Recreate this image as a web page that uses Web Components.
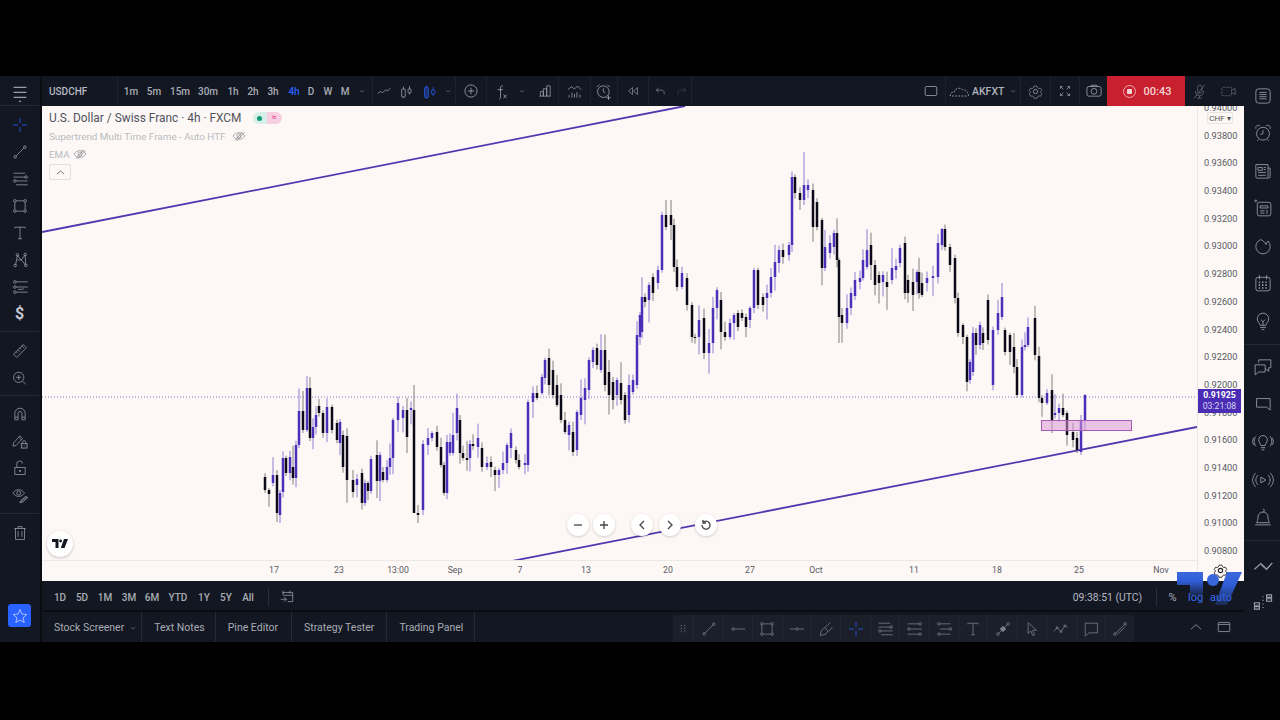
<!DOCTYPE html>
<html lang="en">
<head>
<meta charset="utf-8">
<title>USDCHF chart</title>
<style>
html,body{margin:0;height:720px;overflow:hidden;background:#000;font-family:Roboto,"Liberation Sans",sans-serif}
body{padding-top:76px;box-sizing:border-box}
</style>
</head>
<body>
<tv-app></tv-app>
<script>
const c=(x,y,r=2)=>`<circle cx="${x}" cy="${y}" r="${r}"/>`;
const ICONS={
menu:`<path stroke-width="2" d="M4 8.500h20M4 16h20M4 24h20"/><circle cx="14" cy="30" r="1" fill="currentColor"/>`,
cross:`<path d="M14 3v8M14 17v8M3 14h8M17 14h8"/>`,
line:`<path d="M8 20 20 8"/>${c(6.5,21.5)}${c(21.5,6.5)}`,
hray:`<path d="M9 14h16"/>${c(6.5,14)}`,
seg:`<path d="M3 14h8.500M16.500 14H25"/>${c(14,14)}`,
fib:`<path d="M4 6h18M8 14h18M4 22h18"/>${c(23.500,6)}${c(6,14)}${c(23.500,22)}`,
fib2:`<path d="M4 5h18M4 11h18M8 17h18M8 23h18"/>${c(23.500,11)}${c(6,17)}`,
chan:`<path d="M8 6h16M8 14h14M8 22h16"/>${c(6,6)}${c(24,14)}${c(6,22)}`,
rect:`<path d="M8 6h12M8 22h12M6 8v12M22 8v12"/>${c(6,6)}${c(22,6)}${c(6,22)}${c(22,22)}`,
text:`<path d="M6 7V5h16v2M14 5v18M11 23h6"/>`,
pattern:`<path d="M7 22 10 7l6 7 6-8 1 16-7-8-6 0"/>${c(6.500,22.500)}${c(10,6)}${c(22,5.500)}${c(23,22.500)}`,
forecast:`<path d="M8 6h18M8 14h18M8 22h18M11 18l9-1"/>${c(6,6)}${c(6,14)}${c(6,22)}`,
ruler:`<path d="m4 19 15-15 5 5-15 15zM8 15l2 2M11 12l3 3M14 9l2 2M17 6l3 3"/>`,
zoom:`<circle cx="12" cy="13" r="8"/><path d="M12 9v8M8 13h8M18 19l5 5"/>`,
magnet:`<path d="M6 23V13a8 8 0 0 1 16 0v10h-5V13a3 3 0 0 0-6 0v10zM6 19h5M17 19h5"/>`,
pencillock:`<path d="m4 17 10-11 4 4L8 21l-5 1zM12 8l4 4"/><rect x="16" y="18" width="9" height="7" fill="currentColor" fill-opacity=".12"/><path d="M18 18v-2a2.500 2.500 0 0 1 5 0v2"/>`,
lock:`<rect x="6" y="13" width="16" height="11"/><path d="M9 13V8a4.500 4.500 0 0 1 9-1"/><circle cx="14" cy="18.500" r="1" fill="currentColor"/>`,
eyepencil:`<path d="M3 11c5-7 13-7 18 0-5 7-13 7-18 0z"/><circle cx="12" cy="11" r="3"/><path d="m15 23 8-7 3 2-8 7-4 1z" fill="currentColor" fill-opacity=".4"/>`,
trash:`<path d="M5 7h18M11 7V4h6v3M7 7v17h14V7M11 11v9M17 11v9"/>`,
star:`<path d="m14 4 3 7 7.500.700-5.700 5 1.700 7.300L14 20.200 7.500 24l1.700-7.300-5.700-5L11 11z"/>`,
lineChart:`<path d="m3 18 5-3 4 2 5-5 3 2 5-5"/>`,
candle:`<path d="M9 6v4M9 23v2M19 5v5M19 16v3"/><rect x="6" y="10" width="6" height="13" rx="1"/><rect x="16.500" y="10" width="5" height="6" rx="1"/>`,
candleBlue:`<path d="M9 4v3M9 24v2M20 7v5M20 18v3"/><rect x="6" y="7" width="6" height="17" rx="1" fill="currentColor" fill-opacity=".35"/><rect x="17" y="12" width="6" height="6" rx="1"/>`,
plusc:`<circle cx="14" cy="14" r="9.500"/><path d="M14 9v10M9 14h10"/>`,
fx:`<path d="M14 24c0 1-1 2-2.500 2M18 5c-2-1-4 0-4 3v16M9 11h9M19 19l5 6M24 19l-5 6"/>`,
bars:`<path d="M4 23h20M6 23v-8h5v8M11 23V10h6v13M17 23V5h6v18"/>`,
indicator:`<path d="m3 11 6-5 5 4 5-5 6 6M5 24v-4M10 24v-8M14 24v-6M18 24v-9M23 24v-5"/>`,
alarm:`<circle cx="13" cy="15" r="9"/><path d="M3 8l4-4M19 4l4 4M13 10v5l3 2M21 21v7M17.500 24.500h7"/>`,
rewind:`<path d="M13 7 5 14l8 7zM23 7l-8 7 8 7z"/>`,
undo:`<path d="M10 6 5 11l5 5M5 11h11c4 0 6 3 6 6v3"/>`,
redo:`<path d="m18 6 5 5-5 5M23 11H12c-4 0-6 3-6 6v3"/>`,
square:`<rect x="5" y="7" width="18" height="14" rx="2"/>`,
cloud:`<path stroke-dasharray="2.500 2" d="M2 21c-1-4 2-6 5-5 1-6 9-8 13-3 4-1 6 2 6 4 1 0 2 2 1 4z"/>`,
gear:`<path d="m11 3 6 0 1 3 3 2 3-1 3 5-2 2v3l2 2-3 5-3-1-3 2-1 3h-6l-1-3-3-2-3 1-3-5 2-2v-3l-2-2 3-5 3 1 3-2z" transform="translate(2.800 2.800) scale(.8)"/><circle cx="14" cy="14" r="3.500"/>`,
expand:`<path d="M6 6l5 5M6 10V6h4M22 6l-5 5M22 10V6h-4M6 22l5-5M6 18v4h4M22 22l-5-5M22 18v4h-4"/>`,
camera:`<rect x="3" y="7" width="22" height="15" rx="3"/><circle cx="14" cy="14.500" r="4.500"/><path d="M9 7l1-2h8l1 2"/>`,
micoff:`<path d="M11 14V7a3.500 3.500 0 0 1 7 0v6a3.500 3.500 0 0 1-7 1zM7 13c0 5 3 8 7 8s7-3 7-8M14 21v4M10 25h8M5 25 23 3"/>`,
video:`<rect x="3" y="7" width="16" height="14" rx="2" stroke-dasharray="4 1.500"/><path d="m19 12 6-3v10l-6-3"/>`,
doc:`<rect x="4" y="4" width="20" height="20" rx="4"/><path d="M9 9h10M9 12h10M9 15h10M9 18h10"/>`,
clock:`<circle cx="14" cy="15" r="9"/><path d="M4 8c-1-4 3-6 6-4M24 8c1-4-3-6-6-4M14 10v5l-4 1M8 23l-2 2M20 23l2 2"/>`,
news:`<path d="M4 5h17v19H6a2 2 0 0 1-2-2zM21 10h3v12a2 2 0 0 1-2 2M7 9h6v4H7zM15 9h3M15 12h3M7 16h11M7 20h11"/>`,
listspark:`<rect x="6" y="6" width="19" height="19" rx="3"/><path d="M10 11h11v3H10zM10 18h6M18 18h3M10 21h6M18 21h3M2 4h4M4 2v4"/>`,
flame:`<path d="M11 5C6 7 4 11 4 15a10 10 0 0 0 20 0c0-3-1-6-3-8l-3 5c-1-3-3-5-7-7z"/>`,
calendar:`<rect x="4" y="6" width="20" height="19" rx="3"/><path d="M9 3v6M19 3v6"/><path stroke-width="2.200" stroke-dasharray="2 2.600" d="M8 13h13M8 17h13M8 21h13"/>`,
bulb:`<path d="M10 20c0-3-4-4-4-9a8 8 0 0 1 16 0c0 5-4 6-4 9zM10 23h8M12 26h4M14 14v6M11 12l3 3 3-3"/>`,
chats:`<path d="M3 11h14v10H8l-5 4zM8 8V4h17v11h-3M22 15v5l-5-4"/>`,
chat:`<path d="M5 5h19v16l-5-4H5z"/>`,
bulbwave:`<path d="M11 19c0-3-3-4-3-8a6 6 0 0 1 12 0c0 4-3 5-3 8zM11 22h6M12 25h4M4 6c-3 4-3 10 0 14M24 6c3 4 3 10 0 14M1 8c-2 3-2 7 0 10M27 8c2 3 2 7 0 10"/>`,
broadcast:`<path d="m11 10 7 4-7 4zM7 7c-4 4-4 10 0 14M21 7c4 4 4 10 0 14M4 4c-6 6-6 14 0 20M24 4c6 6 6 14 0 20"/>`,
bell:`<path d="M14 3a2 2 0 0 1 0 4 7 7 0 0 0-7 7c0 5-1 6-2 8h18c-1-2-2-3-2-8a7 7 0 0 0-7-7M3 25h22"/>`,
chev2:`<path d="m2 20 9-8 7 7M12 14l7 6 8-9" stroke-width="1.800"/>`,
dots:`<path stroke-width="1.600" d="M2 15h7v3.500H2zM2 20.500h7V24H2zM19 4h7v3.500h-7zM19 9.500h7V13h-7zM14 6v1.500M14 11v1.500M14 16v1.500M14 21v1.500"/>`,
drag:`<path stroke-width="1.800" stroke-dasharray="1.800 3" d="M11 7v15M17 7v15"/>`,
brush:`<path d="m5 24 2-8 5-4 5 5-3 5zM12 12l9-8M18 18l6-7"/>`,
pin:`<path d="M7 21 21 7"/>${c(6,22)}${c(22,6)}<rect x="11" y="11" width="6" height="6" transform="rotate(45 14 14)" fill="currentColor"/>`,
cursor:`<path d="M8 4v17l4-4 3 7 3-1-3-7h6z"/>`,
wave:`<path d="m3 18 5-6 6 6 6-9 4 2"/>${c(8,12,1.500)}${c(14,18,1.500)}${c(20,9,1.500)}`,
callout:`<path d="M5 5h19v15H11l-6 5z"/>`,
measure:`<path d="M7 21 21 7M10 22 22 11"/>${c(6,22)}${c(22,6)}`,
chevup:`<path d="m5 18 9-8 9 8"/>`,
window:`<rect x="4" y="6" width="20" height="16" rx="1.500"/><path d="M4 9.500h20"/>`,
calgo:`<path d="M7 10V6h17v16H15M7 3v5M19 3v5M7 11h17M3 18h10M9 14l4 4-4 4"/>`,
eyeoff:`<path d="M2 14c6-9 18-9 24 0-6 9-18 9-24 0z"/><circle cx="14" cy="14" r="4"/><path d="M6 23 22 5M9 24 25 7"/>`,
chev:`<path d="m8 12 6 5 6-5"/>`
};
class TvIcon extends HTMLElement{
  connectedCallback(){
    const s=this.getAttribute('size')||18,w=this.getAttribute('w')||s,sw=this.getAttribute('sw')||1.2;
    this.attachShadow({mode:'open'}).innerHTML=`<style>:host{display:inline-flex;align-items:center;justify-content:center;flex:none;width:${w}px;height:100%;color:inherit}svg{display:block;fill:none;stroke:currentColor;stroke-width:${sw};overflow:visible}</style><svg width="${s}" height="${s}" viewBox="0 0 28 28">${ICONS[this.getAttribute('name')]||''}</svg>`;
  }
}
customElements.define('tv-icon',TvIcon);

class TvHeader extends HTMLElement{
  connectedCallback(){
    const iv=[['1m',22],['5m',24],['15m',28],['30m',28],['1h',22],['2h',18],['3h',22],['4h',20],['D',14],['W',20],['M',14]];
    this.attachShadow({mode:'open'}).innerHTML=`<style>
    :host{display:flex;align-items:center;height:30px;background:#131722;color:#a9acb5;font-size:10px;box-sizing:border-box;border-left:2px solid #0b0d13}
    .sym{width:75px;padding-left:7px;box-sizing:border-box;font-weight:500;height:100%;display:flex;align-items:center;color:#b6b9c2;flex:none}
    .d{width:1px;height:100%;background:#1d212c;flex:none}
    .iv{display:flex;height:100%;align-items:center;padding-left:2px;font-weight:500}
    .iv span{display:block;text-align:center}
    .on{color:#2962ff}
    .sp{flex:1}
    .blue{color:#2962ff}
    .dim{color:#4a4e5a}
    .rec{width:78px;height:100%;background:#c8202e;color:#f4d5d7;display:flex;align-items:center;justify-content:center;gap:8px;font-weight:500;font-size:11px;padding-left:2px;box-sizing:border-box}
    .dot{width:13px;height:13px;border:1px solid #f0a8ad;border-radius:50%;box-sizing:border-box;display:flex;align-items:center;justify-content:center}
    .dot::after{content:"";display:block;width:5px;height:5px;background:#f4d5d7;border-radius:1px}
    .name{font-weight:500;width:34px;font-size:10.500px;color:#b0b3bc;flex:none}
    </style>
    <div class="sym">USDCHF</div><div class="d"></div>
    <div class="iv">${iv.map(([t,w])=>`<span class="${t=='4h'?'on':''}" style="width:${w}px">${t}</span>`).join('')}</div>
    <tv-icon name="chev" size="10" w="20"></tv-icon><div class="d"></div>
    <tv-icon name="lineChart" size="16" w="22"></tv-icon>
    <tv-icon name="candle" size="17" w="22"></tv-icon>
    <tv-icon class="blue" name="candleBlue" size="17" w="24"></tv-icon>
    <tv-icon name="chev" size="10" w="14"></tv-icon><div class="d"></div>
    <tv-icon name="plusc" size="18" w="30"></tv-icon><div class="d"></div>
    <tv-icon name="fx" size="17" w="26"></tv-icon>
    <tv-icon name="chev" size="10" w="18"></tv-icon>
    <tv-icon name="bars" size="16" w="27"></tv-icon><div class="d"></div>
    <tv-icon name="indicator" size="17" w="31"></tv-icon><div class="d"></div>
    <tv-icon name="alarm" size="18" w="26"></tv-icon><div class="d"></div>
    <tv-icon name="rewind" size="14" w="30"></tv-icon><div class="d"></div>
    <tv-icon name="undo" size="13" w="22"></tv-icon>
    <tv-icon class="dim" name="redo" size="13" w="20"></tv-icon><div class="d"></div>
    <div class="sp"></div>
    <tv-icon name="square" size="18" w="28"></tv-icon><div class="d"></div>
    <tv-icon name="cloud" size="20" w="26"></tv-icon><span class="name">AKFXT</span>
    <tv-icon name="chev" size="10" w="14"></tv-icon><div class="d"></div>
    <tv-icon name="gear" size="17" w="29"></tv-icon><div class="d"></div>
    <tv-icon name="expand" size="16" w="28"></tv-icon><div class="d"></div>
    <tv-icon name="camera" size="18" w="27"></tv-icon>
    <div class="rec"><span class="dot"></span><span>00:43</span></div>
    <tv-icon name="micoff" size="17" w="29" style="color:#6a6e78"></tv-icon>
    <tv-icon name="video" size="17" w="29" style="color:#6a6e78"></tv-icon>
    <div style="width:1px"></div>`;
  }
}
customElements.define('tv-header',TvHeader);

class TvRail extends HTMLElement{
  connectedCallback(){
    const items=(this.getAttribute('items')||'').split(' ');
    const h=+this.getAttribute('step')||27, sz=+this.getAttribute('iconsize')||19;
    this.attachShadow({mode:'open'}).innerHTML=`<style>
    :host{display:flex;flex-direction:column;align-items:stretch;background:#131722;color:#9a9da6;height:566px;box-sizing:border-box;flex:none}
    .it{display:flex;align-items:center;justify-content:center;flex:none}
    .hr{height:1px;background:#262a35;flex:none}
    .sp{flex:1}
    .usd{font:700 16px Roboto,sans-serif;color:#c3c6ce}
    .blue{color:#2962ff}
    .fav{width:23px;height:23px;border-radius:3px;background:#2962ff;color:#cfdcff;display:flex;align-items:center;justify-content:center}
    .fav tv-icon{height:auto}
    </style>`+items.map(t=>{
      let m;
      if(m=t.match(/^gap(\d+)$/))return `<div style="height:${m[1]}px;flex:none"></div>`;
      if(t=='hr')return `<div class="hr"></div>`;
      if(t=='sp')return `<div class="sp"></div>`;
      if(t=='usd')return `<div class="it usd" style="height:${h}px">$</div>`;
      if(t=='fav')return `<div class="it" style="height:${h}px"><div class="fav"><tv-icon name="star" size="18"></tv-icon></div></div>`;
      const blue=t=='cross';
      return `<div class="it ${blue?'blue':''}" style="height:${h}px"><tv-icon name="${t}" size="${sz}"></tv-icon></div>`;
    }).join('');
  }
}
customElements.define('tv-rail',TvRail);

const CANDLES=`265 477 490 k,269 490 494 k,273 475 483 p,277 475 513 k,280 493 515 p,283 458 492 p,286 458 473 k,290 457 473 p,293 467 478 k,296 445 478 p,299 411 445 p,303 411 430 k,307 388 430 p,310 388 438 k,313 427 438 p,316 415 427 p,319 406 413 k,323 413 433 k,327 407 433 p,332 407 430 k,337 423 440 k,340 422 443 p,343 435 467 k,347 436 480 k,353 480 492 k,357 479 485 p,362 473 503 k,365 483 503 p,368 483 491 k,371 459 491 p,377 455 481 k,380 455 481 p,383 472 480 k,387 467 480 p,390 458 467 p,393 420 458 p,398 403 420 p,403 410 418 p,407 410 437 k,411 408 410 p,414 410 513 k,418 513 515 k,423 444 510 p,428 438 445 p,432 433 438 p,437 432 447 k,441 447 465 k,444 465 493 k,447 442 493 p,450 442 453 p,453 435 453 p,457 408 433 p,460 420 453 k,463 453 458 k,467 458 460 k,470 444 458 p,473 444 446 k,478 438 447 p,482 448 467 k,487 463 467 p,491 462 467 k,495 470 475 k,499 470 475 p,503 463 470 p,507 445 463 p,511 433 448 p,516 450 460 k,519 460 467 k,525 463 465 p,528 402 465 p,533 393 402 p,537 393 398 k,542 377 393 p,545 360 378 p,549 358 385 k,553 370 395 k,557 385 405 k,561 395 420 k,565 420 432 k,569 425 435 p,573 432 452 k,577 412 450 p,581 398 415 p,585 388 400 p,589 360 390 p,593 350 362 p,597 348 365 k,601 350 370 p,605 350 385 k,609 372 395 k,613 382 400 k,617 380 395 p,621 383 400 k,625 395 420 k,629 385 415 p,633 380 392 p,637 335 385 p,640 315 337 p,642 297 332 p,645 297 302 k,649 285 300 p,653 277 293 k,658 270 283 p,662 215 270 p,666 215 227 k,671 215 225 k,674 225 267 k,677 267 287 k,682 273 287 p,687 278 305 k,692 305 337 k,695 337 338 k,699 320 337 p,704 318 353 k,709 343 353 p,713 308 343 p,717 290 308 p,721 300 332 k,725 332 337 k,730 323 337 p,734 315 323 p,738 313 327 k,742 313 318 k,746 317 327 k,750 308 320 p,754 270 308 p,758 270 305 k,763 297 305 k,767 293 298 p,771 277 293 p,775 262 277 p,779 250 263 p,783 250 257 k,789 245 255 p,792 177 245 p,795 177 193 k,800 193 200 k,804 185 200 p,808 185 190 p,813 190 227 k,817 202 227 k,822 220 268 k,825 247 268 p,830 243 253 p,834 233 247 p,837 233 260 k,839 260 317 k,842 315 323 k,847 308 323 p,851 293 308 p,855 280 296 p,860 278 282 p,863 260 278 p,867 250 267 p,871 245 265 k,875 265 285 k,879 275 283 k,883 275 282 p,887 282 287 k,892 268 280 p,896 266 270 p,900 248 263 p,905 243 293 k,908 280 293 k,913 282 295 k,917 272 282 p,919 272 293 k,922 283 295 k,927 278 283 p,933 276 278 p,938 243 277 p,942 229 245 p,945 229 247 k,950 247 265 k,955 258 298 k,958 298 333 k,963 325 337 k,967 337 382 k,970 362 380 p,973 333 372 p,976 333 345 k,980 325 345 p,983 333 343 k,988 300 340 k,993 330 385 p,998 313 330 p,1002 297 317 p,1005 330 352 k,1010 335 352 k,1014 347 367 k,1017 367 395 k,1022 347 395 p,1025 345 347 p,1028 327 345 p,1035 318 355 k,1039 356 398 k,1042 398 403 k,1047 393 403 p,1052 390 420 k,1055 413 415 p,1059 408 413 p,1063 408 415 k,1067 413 435 k,1073 432 440 k,1077 438 450 k,1081 420 452 p,1085 395 420 p`;
const WICK={414:[385,513],804:[152,205],307:[376,432],277:[470,522],280:[490,523],418:[505,523],1002:[283,320],666:[200,230],671:[200,240],942:[228,250],1081:[415,455],1085:[394,430],839:[258,343],423:[440,515],1077:[432,453]};
class TvCandles extends HTMLElement{
  connectedCallback(){
    let seed=12345;const rnd=()=>(seed=(seed*16807)%2147483647)/2147483647;
    let out='';
    for(const row of CANDLES.split(',')){
      const [xs,a,b,col]=row.split(' ');const x=+xs,top=+a,bot=+b;
      const fill=col=='p'?'#4a2fb8':'#0c0a18';
      const w=WICK[x]||[top-2-rnd()*rnd()*22,bot+2+rnd()*rnd()*24];
      out+=`<rect x="${x-.5}" y="${w[0].toFixed(1)}" width="1" height="${(w[1]-w[0]).toFixed(1)}" fill="${col=='p'?'#6a55c4':'#555'}" opacity=".75"/>`;
      out+=`<rect x="${x-1.25}" y="${top}" width="2.5" height="${Math.max(bot-top,1)}" fill="${fill}"/>`;
    }
    this.attachShadow({mode:'open'}).innerHTML=`<style>:host{display:block;position:absolute;inset:0;overflow:hidden}svg{display:block;filter:blur(.45px)}</style>
    <svg width="1155" height="454" viewBox="42 106 1155 454">
      <path d="M42 397H1197" stroke="#8a73c8" stroke-width="1" stroke-dasharray="1 2"/>
      <path d="M42 232 685 106" stroke="#5238b0" stroke-width="1.800" fill="none"/>
      <path d="M512 561 1197 427" stroke="#5238b0" stroke-width="1.800" fill="none"/>
      ${out}
      <rect x="1041.500" y="420.500" width="90" height="10" fill="#d895d6" fill-opacity=".55" stroke="#a45cb5"/>
    </svg>`;
  }
}
customElements.define('tv-candles',TvCandles);

class TvLegend extends HTMLElement{
  connectedCallback(){
    this.attachShadow({mode:'open'}).innerHTML=`<style>
    :host{position:absolute;left:7px;top:4px;display:flex;flex-direction:column;align-items:flex-start;color:#b9bbc0;font-size:9.900px}
    .t{display:flex;align-items:center;height:16px;font-size:11.900px;color:#50535e;gap:11px}
    .pill{display:flex;height:12px;width:29px;border-radius:6px;overflow:hidden;font-size:9px;line-height:11px;text-align:center}
    .pill i{flex:1;background:#d8efe8;display:flex;align-items:center;justify-content:center}
    .pill i::after{content:"";width:5px;height:5px;border-radius:50%;background:#109a78}
    .pill b{flex:1;background:#f8cfe0;color:#e0408a;font-weight:400}
    .r{display:flex;align-items:center;height:18px;gap:6px}
    .r tv-icon{height:14px;color:#8b8d94}
    .btn{width:22px;height:16px;margin-top:1px;border:1px solid #e2dfdf;border-radius:2px;box-sizing:border-box;display:flex;align-items:center;justify-content:center;color:#555;background:#fdf8f6}
    .btn tv-icon{height:auto}
    </style>
    <div class="t"><span>U.S. Dollar / Swiss Franc · 4h · FXCM</span><span class="pill"><i></i><b>≈</b></span></div>
    <div class="r" style="margin-top:1px"><span>Supertrend Multi Time Frame - Auto HTF</span><tv-icon name="eyeoff" size="14" sw="1.500"></tv-icon></div>
    <div class="r" style="gap:3px"><span>EMA</span><tv-icon name="eyeoff" size="14" sw="1.500"></tv-icon></div>
    <div class="btn"><tv-icon name="chevup" size="11" sw="2"></tv-icon></div>`;
  }
}
customElements.define('tv-legend',TvLegend);

class TvNav extends HTMLElement{
  connectedCallback(){
    const b=(x,n)=>`<span class="b" style="left:${x-11}px"><svg width="12" height="12" viewBox="0 0 12 12" fill="none" stroke="currentColor" stroke-width="1.300">${n}</svg></span>`;
    this.attachShadow({mode:'open'}).innerHTML=`<style>
    :host{position:absolute;inset:0;pointer-events:none}
    .b{position:absolute;top:408px;width:22px;height:22px;border-radius:50%;background:#fff;box-shadow:0 1px 3px rgba(0,0,0,.18);display:flex;align-items:center;justify-content:center;color:#444}
    .logo{position:absolute;left:5px;top:425px;width:26px;height:26px;border-radius:50%;background:#fff;box-shadow:0 1px 3px rgba(0,0,0,.22);display:flex;align-items:center;justify-content:center}
    </style>
    ${b(536,'<path d="M2 6h8"/>')}${b(562,'<path d="M2 6h8M6 2v8"/>')}${b(600,'<path d="M8 2 4 6l4 4"/>')}${b(628,'<path d="m4 2 4 4-4 4"/>')}${b(664,'<path d="M3 3.500A4 4 0 1 1 2 6M3 1v3h3"/>')}
    <span class="logo"><svg width="16" height="10" viewBox="0 0 16 10" fill="#131722"><path d="M0 0h6.500v9H3.500V3H0z"/><circle cx="8.600" cy="2" r="1.400"/><path d="M12 0h4l-3.500 9H8.800z"/></svg></span>`;
  }
}
customElements.define('tv-nav',TvNav);

class TvPriceAxis extends HTMLElement{
  connectedCallback(){
    const ps=[];for(let v=94000;v>=90800;v-=200)ps.push('0.'+v);
    this.attachShadow({mode:'open'}).innerHTML=`<style>
    :host{display:block;position:relative;width:47px;flex:none;overflow:hidden;background:#fdf8f6;border-left:1px solid #ebe7e5;box-sizing:border-box;color:#565963;font-size:9.200px}
    .l{display:flex;flex-direction:column;margin-top:-13px;padding-left:6px}
    .l span{height:27.690px;line-height:29.500px;flex:none}
    .chf{position:absolute;left:9px;top:6px;width:26px;height:12px;background:#fdf8f6;border:1px solid #e5e2e0;border-radius:2px;box-sizing:border-box;font-size:8px;line-height:11px;text-align:center;color:#555}
    .tag{position:absolute;left:0;top:283px;width:43px;height:24px;background:#4a2db4;color:#fff;font-size:8.700px;line-height:11px;text-align:center;padding-top:1px;box-sizing:border-box;font-weight:700}
    .tag span{display:block;font-weight:400;color:#d8d2f2}
    .gear{position:absolute;left:14px;top:456px;width:17px;height:17px;color:#222}
    </style>
    <div class="l">${ps.map(p=>`<span>${p}</span>`).join('')}</div>
    <div class="chf">CHF ▾</div>
    <div class="tag">0.91925<span>03:21:08</span></div>
    <div class="gear"><tv-icon name="gear" size="17" sw="1.800"></tv-icon></div>`;
  }
}
customElements.define('tv-price-axis',TvPriceAxis);

class TvChart extends HTMLElement{
  connectedCallback(){
    const ts=[['17',274],['23',339],['13:00',398],['Sep',455],['7',520],['13',586],['20',668],['27',750],['Oct',816],['11',914],['18',997],['25',1079],['Nov',1161]];
    this.attachShadow({mode:'open'}).innerHTML=`<style>
    :host{display:flex;height:475px;background:#fdf8f6;box-sizing:border-box;border-left:2px solid #0b0d13}
    .main{flex:1;display:flex;flex-direction:column;min-width:0}
    .pane{position:relative;height:454px;overflow:hidden}
    .time{position:relative;flex:1;border-top:1px solid #ece8e6;color:#565963;font-size:8.700px}
    .time span{position:absolute;top:4px;transform:translateX(-50%)}
    </style>
    <div class="main"><div class="pane"><tv-candles></tv-candles><tv-legend></tv-legend><tv-nav></tv-nav></div>
    <div class="time">${ts.map(([t,x])=>`<span style="left:${x-42}px">${t}</span>`).join('')}</div></div>
    <tv-price-axis></tv-price-axis>`;
  }
}
customElements.define('tv-chart',TvChart);

class TvRange extends HTMLElement{
  connectedCallback(){
    const r=[['1D',20],['5D',24],['1M',22],['3M',26],['6M',20],['YTD',32],['1Y',20],['5Y',24],['All',20]];
    this.attachShadow({mode:'open'}).innerHTML=`<style>
    :host{display:flex;align-items:center;height:31px;background:#131722;color:#a9acb5;font-size:10px;box-sizing:border-box;border-left:2px solid #0b0d13;border-bottom:2px solid #0b0d13;padding-top:3px}
    .rs{display:flex;padding-left:8px;font-weight:500}
    .rs span{text-align:center}
    .d{width:1px;height:18px;background:#2a2e39;flex:none}
    .sp{flex:1}
    .clk{color:#b6b9c2;font-size:10.400px;margin-right:14px}
    .blue{color:#3a6cf0;font-size:11px}
    .u{width:31px;text-align:center;font-size:11px}
    </style>
    <div class="rs">${r.map(([x,w])=>`<span style="width:${w}px">${x}</span>`).join('')}</div>
    <div class="d" style="margin-left:10px"></div>
    <tv-icon name="calgo" size="16" w="36" style="height:auto"></tv-icon>
    <div class="sp"></div>
    <span class="clk">09:38:51 (UTC)</span><div class="d"></div>
    <span class="u">%</span>
    <span class="blue" style="width:15px;text-align:center">log</span>
    <span class="blue" style="width:33px;text-align:center;padding-left:3px;box-sizing:border-box">auto</span>
    <div style="width:8px"></div>`;
  }
}
customElements.define('tv-range',TvRange);

class TvTabs extends HTMLElement{
  connectedCallback(){
    const tools=['line','hray','rect','seg','brush','cross','fib2','fib','chan','text','pin','cursor','wave','callout','measure'];
    this.attachShadow({mode:'open'}).innerHTML=`<style>
    :host{display:flex;align-items:stretch;height:30px;background:#131722;color:#a9acb5;font-size:10.500px;box-sizing:border-box;border-left:2px solid #0b0d13}
    .tab{display:flex;align-items:center;border-right:1px solid #262a35;padding:1px 12px 0;flex:none}
    .tool{display:flex;background:#1b1f2a;border-radius:3px 3px 0 0;margin-left:198px;height:27px;margin-top:3px;width:461px;color:#7d808a;flex:none}
    .tool div{flex:1;display:flex;align-items:center;justify-content:center;border-right:1px solid #232733}
    .tool div:last-child{border:0}
    .tool .blue{color:#2962ff}
    .w{color:#b2b5be}
    .sp{flex:1}
    </style>
    <div class="tab" style="padding:1px 0 0 12px">Stock Screener<tv-icon name="chev" size="10" w="17"></tv-icon></div>
    <div class="tab" style="padding-right:10px">Text Notes</div><div class="tab" style="padding-right:13px">Pine Editor</div><div class="tab">Strategy Tester</div><div class="tab" style="padding-right:11px">Trading Panel</div>
    <div class="tool"><div style="flex:0 0 20px"><tv-icon name="drag" size="16"></tv-icon></div>${tools.map(t=>`<div class="${t=='cross'?'blue':''}"><tv-icon name="${t}" size="18"></tv-icon></div>`).join('')}</div>
    <div class="sp"></div>
    <tv-icon class="w" name="chevup" size="16" w="28"></tv-icon>
    <tv-icon class="w" name="window" size="16" w="28"></tv-icon>
    <div style="width:6px"></div>`;
  }
}
customElements.define('tv-tabs',TvTabs);

class TvWatermark extends HTMLElement{
  connectedCallback(){
    this.attachShadow({mode:'open'}).innerHTML=`<style>:host{position:absolute;left:1177px;top:496px;width:65px;height:34px;pointer-events:none}svg{display:block}</style>
    <svg width="65" height="34" viewBox="0 0 65 34"><defs><linearGradient id="g" x1="0" y1="0" x2="0" y2="1"><stop offset="0" stop-color="#3a68dc"/><stop offset=".4" stop-color="#2f5dd6"/><stop offset="1" stop-color="#2f5dd6" stop-opacity=".25"/></linearGradient></defs>
    <path fill="url(#g)" d="M0 0h26v23H13V13H0z"/><circle fill="#3a68dc" cx="36" cy="8" r="6"/><path fill="url(#g)" d="M50 0h15L50 33H38z"/></svg>`;
  }
}
customElements.define('tv-watermark',TvWatermark);

class TvApp extends HTMLElement{
  connectedCallback(){
    this.attachShadow({mode:'open'}).innerHTML=`<style>
    :host{display:flex;position:relative;width:1280px;height:566px;background:#131722;overflow:hidden}
    .mid{width:1204px;flex:none;display:flex;flex-direction:column}
    tv-rail.l{width:40px;padding-right:1px}
    tv-rail.r{width:36px;padding-left:1px}
    </style>
    <tv-rail class="l" step="27" iconsize="18" items="gap1 menu gap1 hr gap5 cross line fib2 rect text pattern forecast usd gap4 hr gap5 ruler zoom gap4 hr gap4 magnet pencillock lock eyepencil gap5 hr gap5 trash sp fav gap13"></tv-rail>
    <div class="mid"><tv-header></tv-header><tv-chart></tv-chart><tv-range></tv-range><tv-tabs></tv-tabs></div>
    <tv-rail class="r" step="37.500" iconsize="20" items="gap1 doc clock news listspark flame calendar bulb gap4 hr gap4 chats chat bulbwave broadcast bell gap4 hr gap5 chev2 dots sp"></tv-rail>
    <tv-watermark></tv-watermark>`;
  }
}
customElements.define('tv-app',TvApp);
</script>
</body>
</html>
